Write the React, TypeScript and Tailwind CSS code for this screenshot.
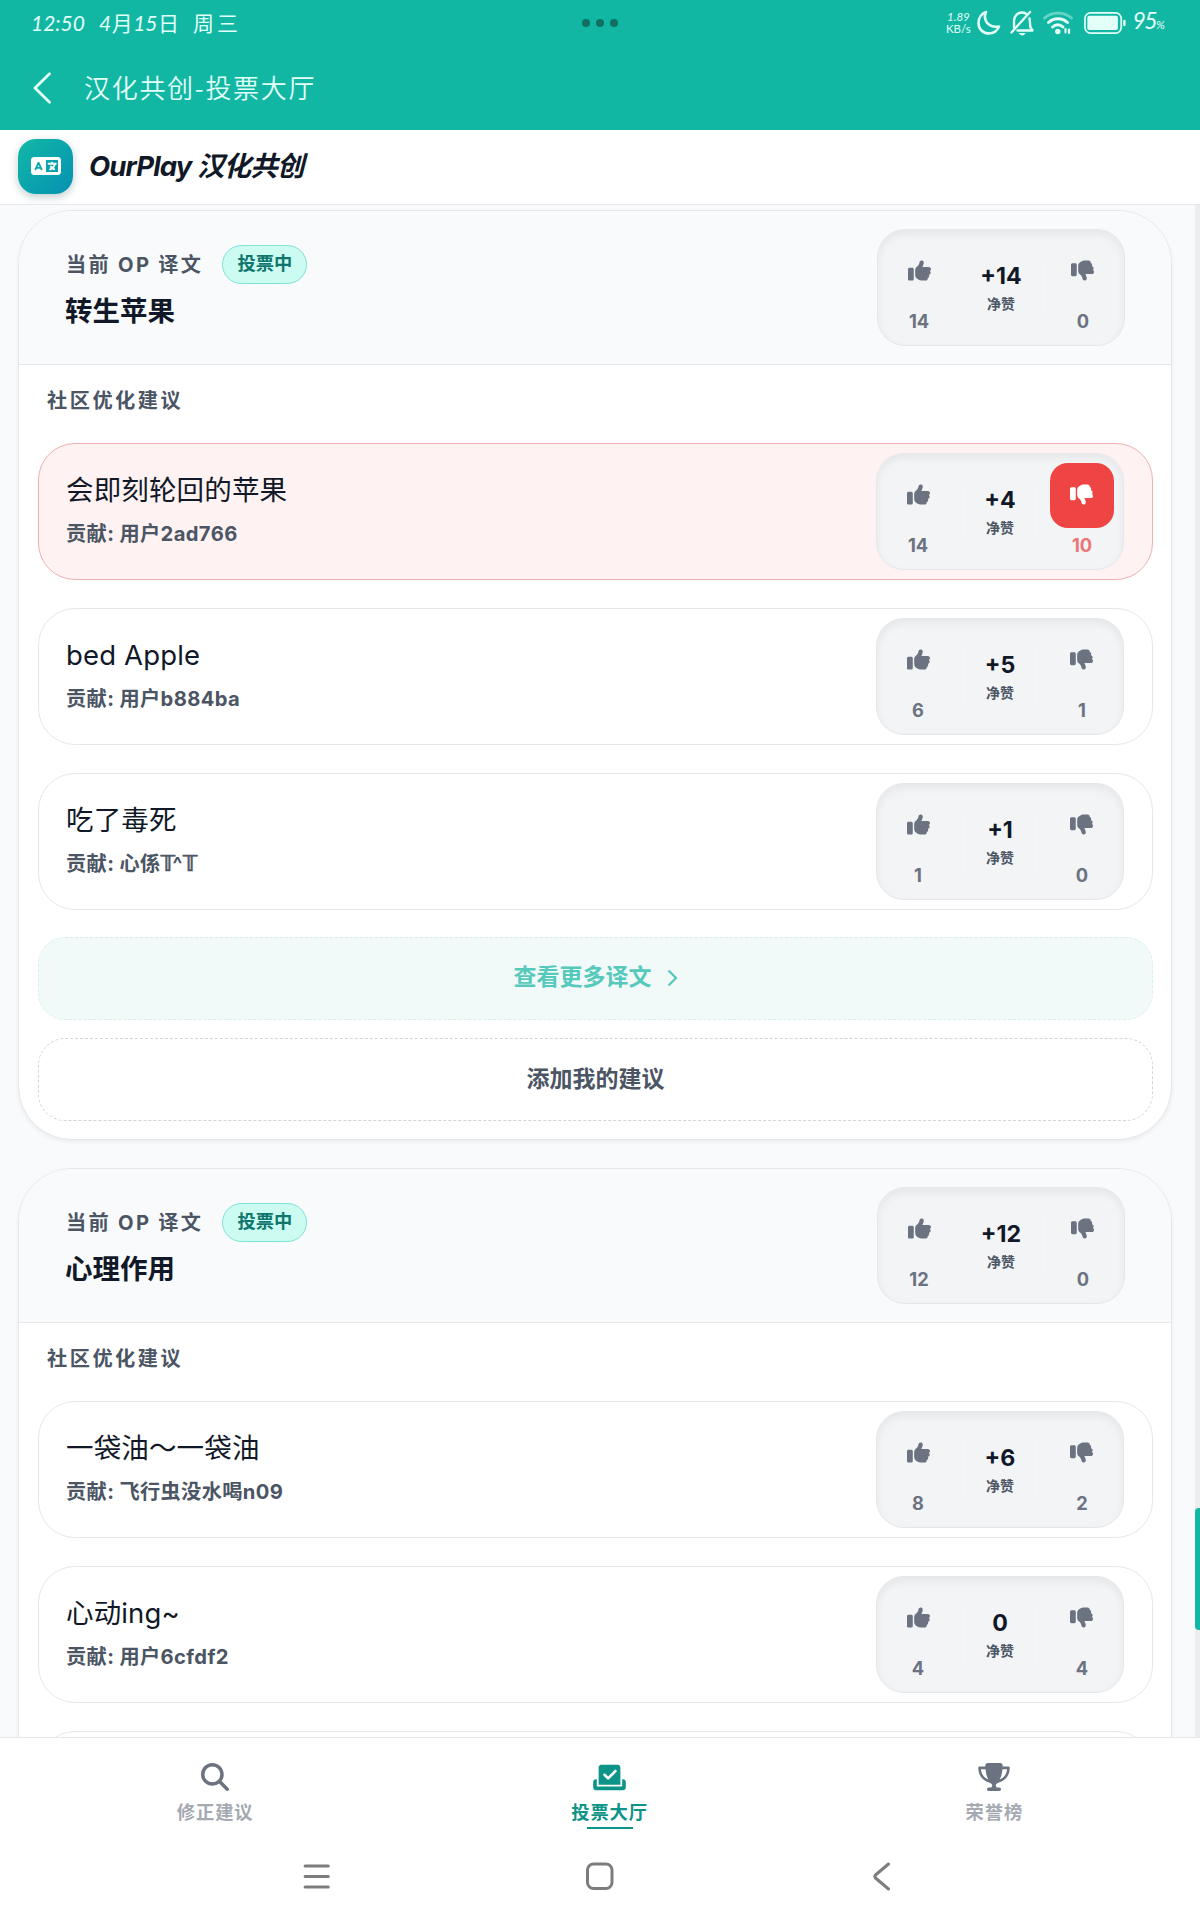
import { FaThumbsUp, FaThumbsDown, FaLanguage, FaMagnifyingGlass, FaCheckToSlot, FaTrophy } from "react-icons/fa6";
import type { ReactNode } from "react";

type Vote = { up: number; net: string; down: number; downActive?: boolean };
type Suggestion = Vote & { title: string; author: ReactNode };

function VoteBox({ up, net, down, downActive }: Vote) {
  return (
    <div className="flex h-[117px] w-[248px] shrink-0 justify-between rounded-[28px] border border-[#e5e7eb] bg-[#f3f4f6] px-[9px] pt-[9px] shadow-[inset_0_4px_8px_rgba(0,0,0,0.06)]">
      <div className="flex w-16 flex-col items-center">
        <div className="flex h-[65px] w-16 items-center justify-center rounded-[18px] pb-[2px] text-[#6b7280]">
          <FaThumbsUp className="size-[23px]" />
        </div>
        <span className="mt-[3px] text-[18.3px] leading-7 font-bold text-[#6b7280]">{up}</span>
      </div>
      <div className="mt-[19px] flex h-[60px] w-[80px] flex-col items-center border-x border-[#f1f2f4] pt-[2px]">
        <span className="text-[23.2px] leading-8 font-bold text-[#111827]">{net}</span>
        <span className="text-[14px] leading-[24px] font-bold text-[#4b5563]">净赞</span>
      </div>
      <div className="flex w-16 flex-col items-center">
        <div
          className={
            downActive
              ? "flex h-[65px] w-16 items-center justify-center rounded-[18px] bg-[#ef4444] pr-px pb-[3px] text-white"
              : "flex h-[65px] w-16 items-center justify-center rounded-[18px] pr-px pb-[3px] text-[#6b7280]"
          }
        >
          <FaThumbsDown className="size-[23px]" />
        </div>
        <span
          className={
            downActive
              ? "mt-[3px] text-[18.3px] leading-7 font-bold text-[#ec7575]"
              : "mt-[3px] text-[18.3px] leading-7 font-bold text-[#6b7280]"
          }
        >
          {down}
        </span>
      </div>
    </div>
  );
}

function Row({ title, author, ...vote }: Suggestion) {
  return (
    <div
      className={
        vote.downActive
          ? "flex h-[137px] items-center justify-between rounded-[37px] border border-[#eeb0b0] bg-[#fef2f2] pr-7 pl-[27px]"
          : "flex h-[137px] items-center justify-between rounded-[37px] border border-[#e5e7eb] bg-white pr-7 pl-[27px]"
      }
    >
      <div>
        <div className="text-[27.5px] leading-[44px] tracking-[0.15px] text-[#111827]">{title}</div>
        <div className="text-[20.2px] leading-[44px] font-bold tracking-[0.38px] text-[#4b5563]">贡献: {author}</div>
      </div>
      <VoteBox {...vote} />
    </div>
  );
}

function Card({ title, vote, rows, actions }: { title: string; vote: Vote; rows: Suggestion[]; actions?: boolean }) {
  return (
    <section className="shrink-0 overflow-hidden rounded-[54px] border border-[#e5e7eb] bg-white shadow-[0_2px_4px_rgba(0,0,0,0.06)]">
      <div className="flex h-[154px] justify-between border-b border-[#e5e7eb] bg-[#f9fafc] pt-[18px] pr-[46px] pl-[47px]">
        <div className="pt-[16px]">
          <div className="flex items-center gap-[19px]">
            <span className="text-[20.2px] leading-[39px] font-bold tracking-[2.3px] text-[#4b5563]">当前 OP 译文</span>
            <span className="flex h-[39px] w-[85px] items-center justify-center rounded-full border border-[#7fe3d4] bg-[#ccfbf1] pb-[2px] text-[18.3px] leading-none font-bold text-[#0f766e]">
              投票中
            </span>
          </div>
          <div className="mt-[5px] -ml-px text-[27.5px] leading-[44px] font-bold text-[#111827]">{title}</div>
        </div>
        <VoteBox {...vote} />
      </div>
      <div className="pr-[18px] pb-[18px] pl-[19px]">
        <div className="flex h-[78px] items-start pt-[17px] pl-[9px] text-[20.2px] leading-[38px] font-bold tracking-[2.5px] text-[#4b5563]">
          社区优化建议
        </div>
        <div className="flex flex-col gap-7">
          {rows.map((r) => (
            <Row key={r.title} {...r} />
          ))}
          {!actions && <div className="h-[137px] rounded-[37px] border border-[#e5e7eb] bg-white" />}
        </div>
        {actions && (
          <>
            <div className="mt-[27px] flex h-[83px] items-center justify-center gap-[15px] rounded-[27px] border border-dashed border-[#d9f0ec] bg-[#f1faf9] pb-[2px] text-[23px] font-bold text-[#55c9bb]">
              查看更多译文
              <svg className="h-[18px] w-[11px]" viewBox="0 0 11 18" fill="none" stroke="currentColor" strokeWidth="2.2">
                <path d="M1.5 1.5 9 9l-7.5 7.5" />
              </svg>
            </div>
            <div className="mt-[18px] flex h-[83px] items-center justify-center rounded-[27px] border border-dashed border-[#d1d5db] pb-px text-[23px] font-bold text-[#4b5563]">
              添加我的建议
            </div>
          </>
        )}
      </div>
    </section>
  );
}

function StatusBar() {
  return (
    <div className="grid h-[45px] grid-cols-[1fr_auto_1fr] items-center pr-[35px] pl-[31px] text-[#e2fff8]">
      <div className="flex items-center gap-[18px] font-['Lato','Noto_Sans_CJK_SC',sans-serif] text-[21px]">
        <span className="w-[50px] whitespace-nowrap italic">12:50</span>
        <span className="flex w-[80px] justify-between whitespace-nowrap">
          <i>4</i>月<i>15</i>日
        </span>
        <span className="-ml-1 tracking-[3px]">周三</span>
      </div>
      <div className="flex translate-x-[2px] justify-center gap-1.5">
        <span className="size-2 rounded-full bg-[#136f60]" />
        <span className="size-2 rounded-full bg-[#136f60]" />
        <span className="size-2 rounded-full bg-[#136f60]" />
      </div>
      <div className="flex items-center justify-end">
        <div className="w-[26px] text-center font-['Lato',sans-serif] text-[11.5px] leading-[12px]">
          <div className="italic">1.89</div>
          <div>KB/s</div>
        </div>
        <svg className="ml-1.5 h-[25px] w-6" viewBox="0 0 24 25" fill="none" stroke="currentColor" strokeWidth="2.6" strokeLinejoin="round">
          <path d="M9 2C6 9 10 18 22 16.5C20 21 16.5 23.5 12 23.5C6 23.5 1.5 19 1.5 13C1.5 8 4.5 3.5 9 2Z" />
        </svg>
        <svg className="ml-[9px] h-[26px] w-6" viewBox="0 0 24 26" fill="none" stroke="currentColor" strokeWidth="2.4" strokeLinecap="round" strokeLinejoin="round">
          <path d="M1.5 22.5 20 2M4 17.5V11C4 6 7.5 2.5 12 2.5C13.5 2.5 15 3 16 3.7M19.5 8.5C20 11 20 14 20.3 17L22.5 20.5H7.5" />
          <path d="M9.5 23.5H15a3 2.5 0 0 1-5.5 0Z" fill="currentColor" strokeWidth="1" />
        </svg>
        <svg className="ml-[9px] h-[24px] w-[30px]" viewBox="0 0 30 24" fill="none" stroke="currentColor" strokeWidth="2.9" strokeLinecap="round">
          <path d="M1.5 7C9 0.5 21 0.5 28.5 7" opacity="0.4" />
          <path d="M5.5 11.5C11 6.5 19 6.5 24.5 11.5M9.5 16C12.5 13 17 13 20 16" />
          <circle cx="14.8" cy="20.5" r="2.7" fill="currentColor" stroke="none" />
          <path d="M22.5 18v3.5M26 18.5v3.5" strokeWidth="2.2" />
        </svg>
        <svg className="ml-[11px] h-[22px] w-[42px]" viewBox="0 0 44 24" preserveAspectRatio="none" fill="none">
          <rect x="1" y="1" width="38" height="22" rx="6" stroke="currentColor" strokeWidth="1.8" />
          <rect x="3.5" y="4.2" width="32" height="15.5" rx="2" fill="currentColor" />
          <rect x="41" y="8.5" width="2.6" height="7" rx="1.2" fill="currentColor" />
        </svg>
        <span className="ml-1.5 font-['Lato',sans-serif] text-[23px] leading-6 tracking-[-1.5px] italic">
          95<small className="text-[12px] tracking-normal">%</small>
        </span>
      </div>
    </div>
  );
}

const doubleT = <span className="inline-block w-[12px] font-['DejaVu_Sans',sans-serif] text-[21px] leading-none tracking-normal [-webkit-text-stroke:0.7px_#4b5563]">𝕋</span>;

export default function App() {
  return (
    <div className="flex h-[1920px] w-[1200px] flex-col overflow-hidden bg-white font-['Inter','Noto_Sans_CJK_SC','Noto_Sans',sans-serif]">
      <header className="h-[130px] shrink-0 bg-[#11b7a3]">
        <StatusBar />
        <div className="flex h-[85px] items-start pl-[33px]">
          <svg className="mt-[27px] h-8 w-[19px] text-[#e2fff8]" viewBox="0 0 19 32" fill="none" stroke="currentColor" strokeWidth="2.8" strokeLinecap="round" strokeLinejoin="round">
            <path d="M16.5 1.8 2 16l14.5 14.2" />
          </svg>
          <span className="ml-[32px] font-['Noto_Sans_CJK_SC',sans-serif] text-[26px] leading-[83px] font-[350] tracking-[1.7px] text-[#e2fff8]">
            汉化共创-投票大厅
          </span>
        </div>
      </header>

      <div className="flex h-[75px] shrink-0 items-center border-b border-[#e5e7eb] pb-[2px] pl-[18px]">
        <div className="flex size-[55px] items-center justify-center rounded-[18px] bg-linear-to-br from-[#14b8a6] to-[#0891b2] text-white shadow-[0_3px_8px_rgba(0,60,60,0.25)]">
          <FaLanguage className="h-[24px] w-[30px]" />
        </div>
        <h1 className="mt-px ml-4 text-[27.5px] font-bold tracking-[-0.9px] text-[#111827] italic">OurPlay 汉化共创</h1>
      </div>

      <div className="flex h-[1532px] shrink-0 overflow-hidden bg-[#f8fafc]">
        <main className="flex flex-1 flex-col gap-7 pt-[5px] pr-[23px] pl-[18px]">
          <Card
            title="转生苹果"
            vote={{ up: 14, net: "+14", down: 0 }}
            actions
            rows={[
              { title: "会即刻轮回的苹果", author: "用户2ad766", up: 14, net: "+4", down: 10, downActive: true },
              { title: "bed Apple", author: "用户b884ba", up: 6, net: "+5", down: 1 },
              { title: "吃了毒死", author: <>心係{doubleT}^{doubleT}</>, up: 1, net: "+1", down: 0 },
            ]}
          />
          <Card
            title="心理作用"
            vote={{ up: 12, net: "+12", down: 0 }}
            rows={[
              { title: "一袋油～一袋油", author: "飞行虫没水喝n09", up: 8, net: "+6", down: 2 },
              { title: "心动ing~", author: "用户6cfdf2", up: 4, net: "0", down: 4 },
            ]}
          />
        </main>
        <div className="w-[5px] bg-[#ebedef] pt-[1303px]">
          <div className="h-[122px] rounded-l bg-[#11b7a3]" />
        </div>
      </div>

      <nav className="flex h-[108px] shrink-0 justify-around border-t border-[#e5e7eb] px-[18px] pt-[25px] text-[18.3px] font-bold tracking-[0.9px] text-[#a4a9b2]">
        <div className="flex flex-col items-center">
          <FaMagnifyingGlass className="size-[28px] text-[#6b7280]" />
          <span className="mt-[7px] leading-7">修正建议</span>
        </div>
        <div className="flex flex-col items-center text-[#0d9488]">
          <FaCheckToSlot className="h-[29px] w-[33px]" />
          <span className="mt-[6px] leading-7">投票大厅</span>
          <span className="mt-px h-[2px] w-[46px] bg-[#0d9488]" />
        </div>
        <div className="flex flex-col items-center">
          <FaTrophy className="h-[28px] w-[32px] text-[#6b7280]" />
          <span className="mt-[7px] leading-7">荣誉榜</span>
        </div>
      </nav>

      <div className="flex h-[75px] shrink-0 pl-[303px] pt-[16px] text-[#7d7d7d]">
        <svg className="h-[30px] w-[27px]" viewBox="0 0 27 30" stroke="currentColor" strokeWidth="3.2" strokeLinecap="round">
          <path d="M2.2 5h23M2.2 15.5h23M2.2 26h23" />
        </svg>
        <svg className="ml-[256px] h-[30px] w-[28px]" viewBox="0 0 28 30" fill="none" stroke="currentColor" strokeWidth="3">
          <rect x="1.5" y="3" width="24.5" height="24.5" rx="6" />
        </svg>
        <svg className="ml-[258px] h-[30px] w-[20px]" viewBox="0 0 20 30" fill="none" stroke="currentColor" strokeWidth="3" strokeLinecap="round" strokeLinejoin="round">
          <path d="M16.5 3 3.5 14Q2.3 15.5 3.5 17L16.5 28" />
        </svg>
      </div>
    </div>
  );
}
